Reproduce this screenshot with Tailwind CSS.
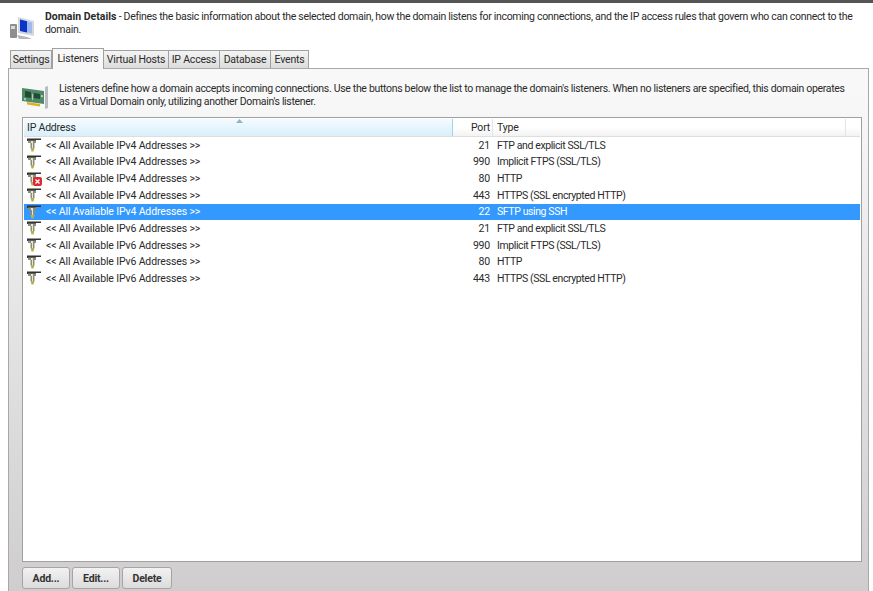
<!DOCTYPE html>
<html lang="en">
<head>
  <meta charset="utf-8">
  <title>Domain Details</title>
  <script src="https://cdn.jsdelivr.net/npm/@tailwindcss/browser@4"></script>
</head>
<body class="h-[591px] w-[873px] overflow-hidden bg-white font-['Roboto',sans-serif] text-[10.5px] leading-[13px] tracking-[-0.2px] text-[#2a2a2a]">
  <svg class="hidden">
    <symbol id="plug" viewBox="0 0 15 14">
      <path d="M0 0.500h14v1.500H9v1H0z" fill="#333"/>
      <path d="M1 2.500h8v2.500H7.500v5h-4V5H1z" fill="#8d8d7d"/>
      <path d="M2 3h2v2h1v5h1V3z" fill="#e6e6d8"/>
      <path d="M3.500 10h4l-1 3.500h-2z" fill="#b8b04a"/>
    </symbol>
  </svg>
  <div class="h-[3px] bg-[#555]"></div>

  <header class="flex h-[45px] pl-[9px] pr-4 pt-[8px]">
    <svg class="mt-[4px] h-[26px] w-[28px] shrink-0" viewBox="0 0 28 26">
      <rect x="1" y="9" width="7" height="14" rx="1" fill="#8b8f92"/>
      <rect x="2" y="11" width="4" height="3" fill="#d8dadb"/>
      <path d="M9 2l16 4v15L9 18z" fill="#d5d8da"/>
      <path d="M11 4.500l12 3v11l-12-2.500z" fill="#9fb8f0"/>
      <path d="M11 4.500l7 1.750v11.250L11 16z" fill="#0a35c8"/>
      <path d="M8 20l10 2 5 2H10z" fill="#b4b7ba"/>
    </svg>
    <p class="ml-[8px] mt-[-1px] w-[815px] shrink-0 tracking-[-0.3px]"><b class="font-bold tracking-normal">Domain Details</b> - Defines the basic information about the selected domain, how the domain listens for incoming connections, and the IP access rules that govern who can connect to the domain.</p>
  </header>

  <nav class="ml-[10px] flex h-[20px] items-end">
    <div class="flex h-[18px] w-[42px] items-center justify-center border border-b-0 border-[#a0a0a0] bg-linear-to-b from-[#f4f4f4] to-[#dcdcdc]">Settings</div>
    <div class="relative z-10 mb-[-1px] flex h-[21px] w-[52px] items-start justify-center border border-b-0 border-[#a0a0a0] bg-[#f8f8f8] pt-[3px]">Listeners</div>
    <div class="flex h-[18px] w-[65px] items-center justify-center border border-b-0 border-l-0 border-[#a0a0a0] bg-linear-to-b from-[#f4f4f4] to-[#dcdcdc]">Virtual Hosts</div>
    <div class="flex h-[18px] w-[51px] items-center justify-center border border-b-0 border-l-0 border-[#a0a0a0] bg-linear-to-b from-[#f4f4f4] to-[#dcdcdc]">IP Access</div>
    <div class="flex h-[18px] w-[51px] items-center justify-center border border-b-0 border-l-0 border-[#a0a0a0] bg-linear-to-b from-[#f4f4f4] to-[#dcdcdc]">Database</div>
    <div class="flex h-[18px] w-[38px] items-center justify-center border border-b-0 border-l-0 border-[#a0a0a0] bg-linear-to-b from-[#f4f4f4] to-[#dcdcdc]">Events</div>
  </nav>

  <main class="ml-[8px] flex h-[523px] w-[861px] flex-col border-x border-t border-[#a8a8a8] bg-linear-to-b from-[#f8f8f8] from-[5%] to-[#cfcdcd] pl-[13px] pr-[6px]">
    <section class="flex h-[48px] pt-[13px]">
      <svg class="mt-[2px] h-[26px] w-[28px] shrink-0" viewBox="0 0 28 26">
        <path d="M0 4l22 3v13L0 17z" fill="#4f8a65"/>
        <path d="M3 7l6 1v6l-6-1zM12 9l6 1v5l-6-1z" fill="#1f4a35"/>
        <path d="M2 14l2 .3v2l-2-.3zM10 10l1 .2v6l-1-.2zM19 11l2 .3v2l-2-.3z" fill="#b9c8bb"/>
        <path d="M5 18l13 2v2.500L5 20.500z" fill="#d7b327"/>
        <path d="M23 3l3-1v22l-3 1z" fill="#b9bcbf"/>
      </svg>
      <p class="ml-[9px] w-[796px] shrink-0 tracking-[-0.32px]">Listeners define how a domain accepts incoming connections. Use the buttons below the list to manage the domain's listeners. When no listeners are specified, this domain operates as a Virtual Domain only, utilizing another Domain's listener.</p>
    </section>

    <section class="h-[445px] border border-[#a0a0a0] bg-white p-px">
      <div class="flex h-[18px] border-b border-[#dedede] bg-linear-to-b from-white from-50% to-[#f2f2f2]">
        <div class="relative flex w-[429px] items-center border-r border-[#9fd4ef] bg-linear-to-b from-[#f4fbff] to-[#d9effa] pl-[3px]">IP Address
          <svg class="absolute left-[212px] top-0 h-[4px] w-[7px]" viewBox="0 0 7 4"><path d="M3.500 0L7 4H0z" fill="#8cb4cc"/></svg>
        </div>
        <div class="flex w-[40px] items-center justify-end border-r border-[#e4e4e4] pr-[2px]">Port</div>
        <div class="flex w-[353px] items-center border-r border-[#e4e4e4] pl-[4px]">Type</div>
      </div>
      <ul>
        <li class="flex h-[16.625px] items-center"><svg class="ml-[3px] h-[14px] w-[15px]"><use href="#plug"/></svg><span class="ml-[4px] w-[407px] tracking-[-0.14px]">&lt;&lt; All Available IPv4 Addresses &gt;&gt;</span><span class="w-[40px] pr-[3px] text-right">21</span><span class="ml-[4px] tracking-[-0.4px]">FTP and explicit SSL/TLS</span></li>
        <li class="flex h-[16.625px] items-center"><svg class="ml-[3px] h-[14px] w-[15px]"><use href="#plug"/></svg><span class="ml-[4px] w-[407px] tracking-[-0.14px]">&lt;&lt; All Available IPv4 Addresses &gt;&gt;</span><span class="w-[40px] pr-[3px] text-right">990</span><span class="ml-[4px] tracking-[-0.4px]">Implicit FTPS (SSL/TLS)</span></li>
        <li class="flex h-[16.625px] items-center">
          <span class="relative ml-[3px] h-[14px] w-[15px]"><svg class="h-[14px] w-[15px]"><use href="#plug"/></svg><svg class="absolute left-[6px] top-[5px] h-[9px] w-[9px]" viewBox="0 0 9 9"><rect width="9" height="9" rx="2" fill="#dc2a35"/><path d="M2.500 2.500l4 4m0-4l-4 4" stroke="#fff" stroke-width="1.300"/></svg></span>
          <span class="ml-[4px] w-[407px] tracking-[-0.14px]">&lt;&lt; All Available IPv4 Addresses &gt;&gt;</span><span class="w-[40px] pr-[3px] text-right">80</span><span class="ml-[4px] tracking-[-0.4px]">HTTP</span></li>
        <li class="flex h-[16.625px] items-center"><svg class="ml-[3px] h-[14px] w-[15px]"><use href="#plug"/></svg><span class="ml-[4px] w-[407px] tracking-[-0.14px]">&lt;&lt; All Available IPv4 Addresses &gt;&gt;</span><span class="w-[40px] pr-[3px] text-right">443</span><span class="ml-[4px] tracking-[-0.4px]">HTTPS (SSL encrypted HTTP)</span></li>
        <li class="flex h-[16.625px] items-center bg-[#3399ff] text-white"><svg class="ml-[3px] h-[14px] w-[15px]"><use href="#plug"/></svg><span class="ml-[4px] w-[407px] tracking-[-0.14px]">&lt;&lt; All Available IPv4 Addresses &gt;&gt;</span><span class="w-[40px] pr-[3px] text-right">22</span><span class="ml-[4px] tracking-[-0.4px]">SFTP using SSH</span></li>
        <li class="flex h-[16.625px] items-center"><svg class="ml-[3px] h-[14px] w-[15px]"><use href="#plug"/></svg><span class="ml-[4px] w-[407px] tracking-[-0.14px]">&lt;&lt; All Available IPv6 Addresses &gt;&gt;</span><span class="w-[40px] pr-[3px] text-right">21</span><span class="ml-[4px] tracking-[-0.4px]">FTP and explicit SSL/TLS</span></li>
        <li class="flex h-[16.625px] items-center"><svg class="ml-[3px] h-[14px] w-[15px]"><use href="#plug"/></svg><span class="ml-[4px] w-[407px] tracking-[-0.14px]">&lt;&lt; All Available IPv6 Addresses &gt;&gt;</span><span class="w-[40px] pr-[3px] text-right">990</span><span class="ml-[4px] tracking-[-0.4px]">Implicit FTPS (SSL/TLS)</span></li>
        <li class="flex h-[16.625px] items-center"><svg class="ml-[3px] h-[14px] w-[15px]"><use href="#plug"/></svg><span class="ml-[4px] w-[407px] tracking-[-0.14px]">&lt;&lt; All Available IPv6 Addresses &gt;&gt;</span><span class="w-[40px] pr-[3px] text-right">80</span><span class="ml-[4px] tracking-[-0.4px]">HTTP</span></li>
        <li class="flex h-[16.625px] items-center"><svg class="ml-[3px] h-[14px] w-[15px]"><use href="#plug"/></svg><span class="ml-[4px] w-[407px] tracking-[-0.14px]">&lt;&lt; All Available IPv6 Addresses &gt;&gt;</span><span class="w-[40px] pr-[3px] text-right">443</span><span class="ml-[4px] tracking-[-0.4px]">HTTPS (SSL encrypted HTTP)</span></li>
      </ul>
    </section>

    <footer class="flex gap-[2px] pt-[5px]">
      <button class="h-[22px] w-[48px] rounded-[3px] border border-[#a5a5a5] bg-linear-to-b from-[#f2f2f2] to-[#dcdcdc] font-bold text-[#333]">Add...</button>
      <button class="h-[22px] w-[48px] rounded-[3px] border border-[#a5a5a5] bg-linear-to-b from-[#f2f2f2] to-[#dcdcdc] font-bold text-[#333]">Edit...</button>
      <button class="h-[22px] w-[50px] rounded-[3px] border border-[#a5a5a5] bg-linear-to-b from-[#f2f2f2] to-[#dcdcdc] font-bold text-[#333]">Delete</button>
    </footer>
  </main>
</body>
</html>
